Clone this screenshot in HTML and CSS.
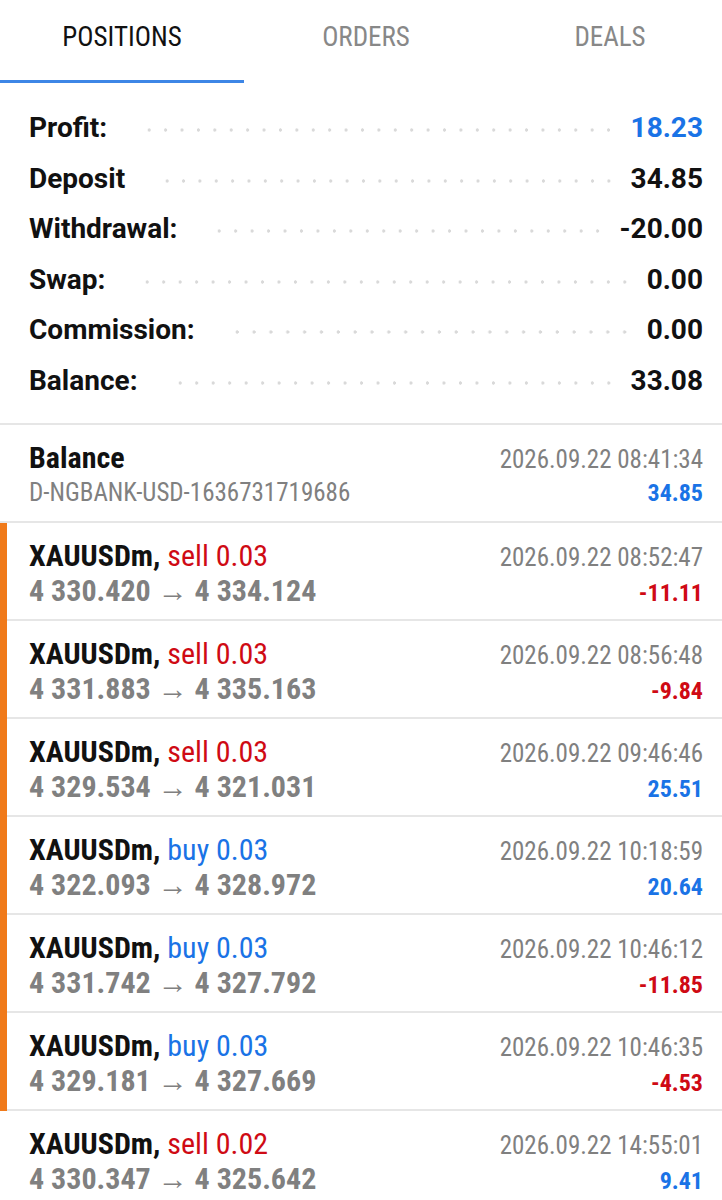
FILE: index.html
```html
<!DOCTYPE html>
<html>
<head>
<meta charset="utf-8">
<link rel="stylesheet" href="styles.css">
</head>
<body>
<div class="tabs">
  <div class="tab active">POSITIONS</div>
  <div class="tab">ORDERS</div>
  <div class="tab">DEALS</div>
</div>

<div class="summary">
  <div class="srow"><span class="slabel">Profit:</span><span class="dots"></span><span class="sval blue">18.23</span></div>
  <div class="srow"><span class="slabel">Deposit</span><span class="dots"></span><span class="sval">34.85</span></div>
  <div class="srow"><span class="slabel">Withdrawal:</span><span class="dots"></span><span class="sval">-20.00</span></div>
  <div class="srow"><span class="slabel">Swap:</span><span class="dots"></span><span class="sval">0.00</span></div>
  <div class="srow"><span class="slabel">Commission:</span><span class="dots"></span><span class="sval">0.00</span></div>
  <div class="srow"><span class="slabel">Balance:</span><span class="dots"></span><span class="sval">33.08</span></div>
</div>

<div class="list">
  <div class="row">
    <div class="l1"><b>Balance</b></div>
    <div class="r1">2026.09.22 08:41:34</div>
    <div class="l2 acct">D-NGBANK-USD-1636731719686</div>
    <div class="r2 blue">34.85</div>
  </div>
  <div class="group">
    <div class="row">
      <div class="l1"><b>XAUUSDm,</b> <span class="red">sell 0.03</span></div>
      <div class="r1">2026.09.22 08:52:47</div>
      <div class="l2">4 330.420 <span class="arr">&rarr;</span> 4 334.124</div>
      <div class="r2 red">-11.11</div>
    </div>
    <div class="row">
      <div class="l1"><b>XAUUSDm,</b> <span class="red">sell 0.03</span></div>
      <div class="r1">2026.09.22 08:56:48</div>
      <div class="l2">4 331.883 <span class="arr">&rarr;</span> 4 335.163</div>
      <div class="r2 red">-9.84</div>
    </div>
    <div class="row">
      <div class="l1"><b>XAUUSDm,</b> <span class="red">sell 0.03</span></div>
      <div class="r1">2026.09.22 09:46:46</div>
      <div class="l2">4 329.534 <span class="arr">&rarr;</span> 4 321.031</div>
      <div class="r2 blue">25.51</div>
    </div>
    <div class="row">
      <div class="l1"><b>XAUUSDm,</b> <span class="blue">buy 0.03</span></div>
      <div class="r1">2026.09.22 10:18:59</div>
      <div class="l2">4 322.093 <span class="arr">&rarr;</span> 4 328.972</div>
      <div class="r2 blue">20.64</div>
    </div>
    <div class="row">
      <div class="l1"><b>XAUUSDm,</b> <span class="blue">buy 0.03</span></div>
      <div class="r1">2026.09.22 10:46:12</div>
      <div class="l2">4 331.742 <span class="arr">&rarr;</span> 4 327.792</div>
      <div class="r2 red">-11.85</div>
    </div>
    <div class="row">
      <div class="l1"><b>XAUUSDm,</b> <span class="blue">buy 0.03</span></div>
      <div class="r1">2026.09.22 10:46:35</div>
      <div class="l2">4 329.181 <span class="arr">&rarr;</span> 4 327.669</div>
      <div class="r2 red">-4.53</div>
    </div>
  </div>
  <div class="row">
    <div class="l1"><b>XAUUSDm,</b> <span class="red">sell 0.02</span></div>
    <div class="r1">2026.09.22 14:55:01</div>
    <div class="l2">4 330.347 <span class="arr">&rarr;</span> 4 325.642</div>
    <div class="r2 blue">9.41</div>
  </div>
</div>
</body>
</html>
```

FILE: styles.css
```css
html, body {
  margin: 0;
  padding: 0;
  background: #ffffff;
}
body {
  font-family: Roboto, "Noto Sans", sans-serif;
  color: #111111;
  width: 722px;
  overflow: hidden;
}
.tabs {
  display: flex;
  height: 83px;
  width: 732px;
  overflow: hidden;
}
.tab {
  flex: 0 0 244px;
  height: 83px;
  box-sizing: border-box;
  text-align: center;
  font-family: "Roboto Condensed", Roboto, sans-serif;
  font-stretch: 75%;
  font-size: 27px;
  line-height: 75px;
  color: #888888;
}
.tab.active {
  color: #111111;
  border-bottom: 3px solid #3d86e6;
}
.summary {
  padding: 20px 19px 16px 29px;
  border-bottom: 2px solid #e6e6e6;
}
.srow {
  display: flex;
  height: 50.6px;
  line-height: 50.6px;
  font-size: 28px;
  font-weight: 700;
}
.dots {
  flex: 1;
  margin: 0 14px 0 34px;
  background-image: radial-gradient(circle, #d9d9d9 1.4px, rgba(255,255,255,0) 1.9px);
  background-size: 16.3px 4px;
  background-repeat: space no-repeat;
  background-position: 0 25px;
}
.sval {
  text-align: right;
}
.blue { color: #1a73e6; }
.red { color: #cf0a14; }

.list {
  font-family: "Roboto Condensed", Roboto, sans-serif;
  font-stretch: 75%;
}
.group {
  border-left: 7px solid #f07a1a;
}
.row {
  display: grid;
  grid-template-columns: 1fr auto;
  grid-template-rows: 35px 35px;
  align-content: start;
  align-items: baseline;
  height: 98px;
  box-sizing: border-box;
  padding: 15px 19px 0 29px;
  border-bottom: 2px solid #e6e6e6;
  line-height: 35px;
}
.group .row {
  padding-left: 22px;
}
.l1 {
  font-size: 30px;
  color: #111111;
  white-space: nowrap;
}
.l1 b { font-weight: 700; }
.l2 {
  font-size: 30px;
  font-weight: 700;
  color: #808080;
  white-space: nowrap;
}
.l2.acct {
  font-size: 25px;
  font-weight: 400;
}
.arr {
  font-weight: 400;
}
.r1 {
  font-size: 25px;
  color: #808080;
  text-align: right;
  white-space: nowrap;
}
.r2 {
  font-size: 24px;
  font-weight: 700;
  text-align: right;
}
```
